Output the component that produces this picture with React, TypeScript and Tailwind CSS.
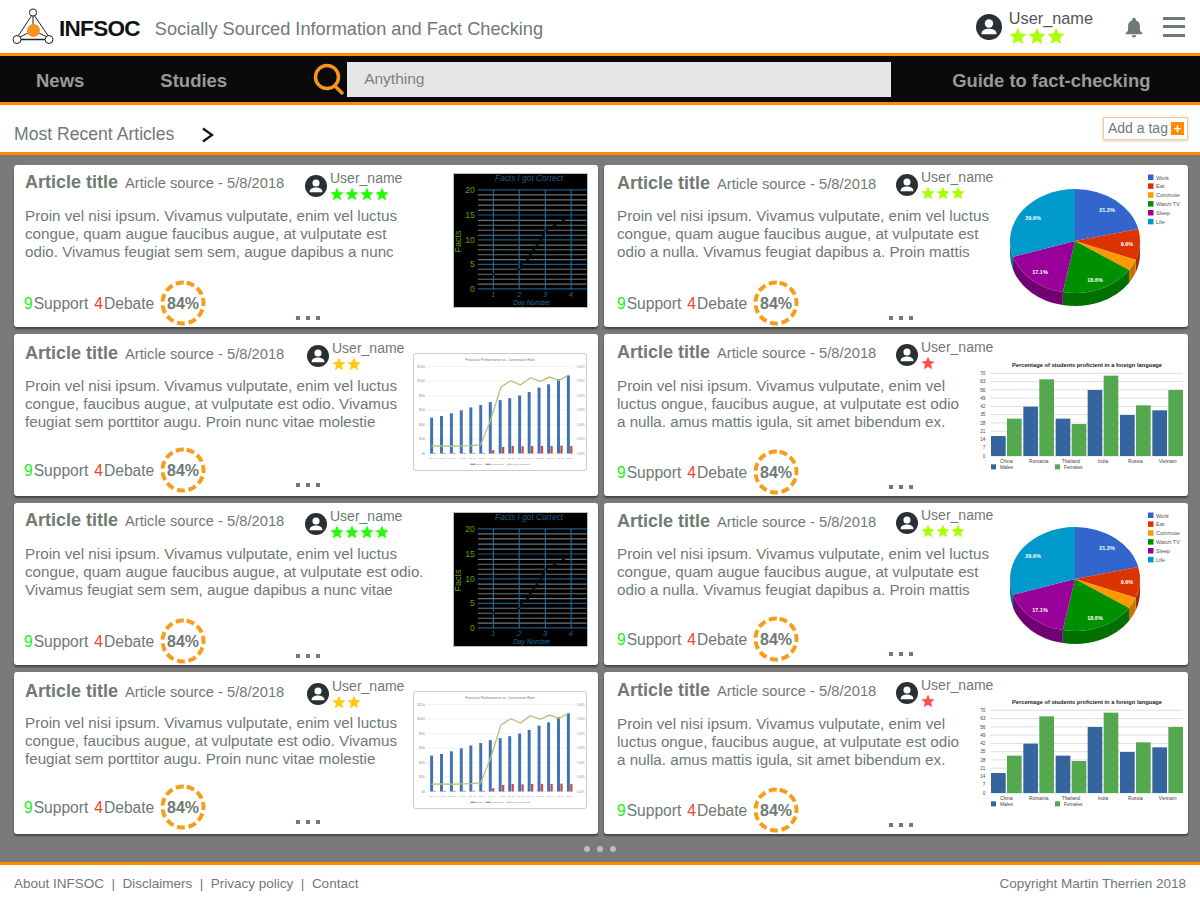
import { ReactNode } from "react";

const INK = "#6f7a72";

function Star({ color, size }: { color: string; size: number }) {
  return (
    <svg width={size} height={size} viewBox="0 0 24 24" fill={color}>
      <path d="M12 1l3.2 7.6 8.2.7-6.2 5.4 1.9 8-7.1-4.3-7.1 4.3 1.9-8L.6 9.300l8.200-.7z" />
    </svg>
  );
}

function Avatar({ size }: { size: number }) {
  return (
    <svg width={size} height={size} viewBox="0 0 26 26" className="shrink-0">
      <circle cx="13" cy="13" r="13" fill="#2a3033" />
      <circle cx="13" cy="9.500" r="4.200" fill="#fff" />
      <path d="M5.500 19.500c0-3.400 4.200-4.800 7.500-4.800s7.500 1.400 7.500 4.800v.8h-15z" fill="#fff" />
    </svg>
  );
}

function Logo() {
  return (
    <svg width="44" height="40" viewBox="0 0 44 40" className="shrink-0">
      <g fill="none" stroke="#222" strokeWidth="1">
        <path d="M20 8L5.500 30" />
        <path d="M22 8l15 22" />
        <path d="M8 32.500h27" strokeWidth="1.500" />
        <path d="M21 8v10M16 26l-8 4M27 26l8 4" />
      </g>
      <circle cx="21.500" cy="23.500" r="6.500" fill="#f7941d" />
      <g fill="#fff" stroke="#222" strokeWidth="1">
        <circle cx="21" cy="5.500" r="3.600" />
        <circle cx="5" cy="32.500" r="4" />
        <circle cx="37" cy="32.500" r="4" />
      </g>
    </svg>
  );
}

function Gauge() {
  return (
    <svg width="46" height="46" viewBox="0 0 46 46" className="shrink-0">
      <circle
        cx="23"
        cy="23"
        r="20.500"
        fill="none"
        stroke="#f79d1c"
        strokeWidth="4"
        strokeDasharray="8 3.710"
        transform="rotate(-80 23 23)"
      />
      <text x="23" y="28.500" textAnchor="middle" fontSize="16" fontWeight="700" fill={INK}>
        84%
      </text>
    </svg>
  );
}

function FactsChart() {
  const rows = [88, 103, 119, 134, 165, 180, 195, 210, 240, 254, 269, 284, 313, 328, 343, 358];
  const marks = [
    [155, 327], [232, 313], [238, 298], [258, 284], [266, 269], [276, 254], [286, 240],
    [298, 224], [306, 210], [314, 195], [340, 180], [366, 165],
  ];
  return (
    <svg width="135" height="135" viewBox="40 25 402 402" className="border border-[#bbb] bg-black">
      <rect x="40" y="25" width="402" height="402" fill="#000" />
      {rows.map((y) => (
        <line key={y} x1="112" x2="441" y1={y} y2={y} stroke="#6f7373" strokeWidth="3.500" />
      ))}
      {[73, 149, 224, 298, 372].map((y) => (
        <line key={y} x1="112" x2="441" y1={y} y2={y} stroke="#1c5a85" strokeWidth="3.500" />
      ))}
      {[159, 237, 316, 394].map((x) => (
        <line key={x} x1={x} x2={x} y1="73" y2="374" stroke="#2078ac" strokeWidth="3" />
      ))}
      {marks.map(([x, y]) => (
        <rect key={`${x}-${y}`} x={x} y={y - 2} width="9" height="4" fill="#000" />
      ))}
      {[[20, 73], [15, 149], [10, 224], [5, 298], [0, 372]].map(([n, y]) => (
        <text key={n} x="103" y={y + 9} textAnchor="end" fontSize="26" fill="#639f00">
          {n}
        </text>
      ))}
      <text x="60" y="262" fontSize="27" fill="#639f00" transform="rotate(-90 60 262)">
        Facts
      </text>
      <text x="267" y="47" textAnchor="middle" fontSize="25" fontStyle="italic" fill="#1d5c88">
        Facts I got Correct
      </text>
      {[1, 2, 3, 4].map((n) => (
        <text key={n} x={81 + n * 78} y="396" textAnchor="middle" fontSize="22" fontStyle="italic" fill="#1d6b9c">
          {n}
        </text>
      ))}
      <text x="275" y="421" textAnchor="middle" fontSize="20" fontStyle="italic" fill="#1d6b9c">
        Day Number
      </text>
    </svg>
  );
}

const slices = [
  { name: "Work", pct: 21.3, top: "#3366cc", wall: "#2a52a3" },
  { name: "Eat", pct: 9.6, top: "#dd3300", wall: "#a82c0e" },
  { name: "Commute", pct: 3.5, top: "#ff9900", wall: "#c47600" },
  { name: "Watch TV", pct: 18.6, top: "#008f00", wall: "#007000" },
  { name: "Sleep", pct: 17.1, top: "#990099", wall: "#730073" },
  { name: "Life", pct: 29.9, top: "#0099cc", wall: "#007799" },
];

function PieChart() {
  const cx = 70;
  const cy = 71;
  const rx = 65;
  const ry = 52;
  const depth = 13;
  const pt = (deg: number, dy = 0) => {
    const a = (deg * Math.PI) / 180;
    return `${(cx + rx * Math.sin(a)).toFixed(2)} ${(cy - ry * Math.cos(a) + dy).toFixed(2)}`;
  };
  let angle = 0;
  const parts = slices.map((s) => {
    const from = angle;
    angle += (s.pct / 100) * 360;
    return { ...s, from, to: angle };
  });
  return (
    <svg width="180" height="140" viewBox="0 0 180 140">
      {parts.map((s) => {
        const a = Math.max(s.from, 90);
        const b = Math.min(s.to, 270);
        if (a >= b) return null;
        return (
          <path
            key={s.name}
            d={`M${pt(a)} A${rx} ${ry} 0 0 1 ${pt(b)} L${pt(b, depth)} A${rx} ${ry} 0 0 0 ${pt(a, depth)} Z`}
            fill={s.wall}
          />
        );
      })}
      {parts.map((s) => (
        <path
          key={s.name}
          d={`M${cx} ${cy} L${pt(s.from)} A${rx} ${ry} 0 ${s.to - s.from > 180 ? 1 : 0} 1 ${pt(s.to)} Z`}
          fill={s.top}
        />
      ))}
      {[
        ["21.3%", 102, 42],
        ["9.6%", 122, 76],
        ["18.6%", 90, 112],
        ["17.1%", 35, 104],
        ["29.9%", 28, 50],
      ].map(([t, x, y]) => (
        <text key={t} x={x} y={y} fontSize="5.500" fontWeight="700" fill="#fff" textAnchor="middle">
          {t}
        </text>
      ))}
      {parts.map((s, i) => (
        <g key={s.name}>
          <rect x="143" y={4.500 + i * 8.870} width="5.500" height="5.500" fill={s.top} />
          <text x="151" y={9.500 + i * 8.870} fontSize="5.500" fill="#555">
            {s.name}
          </text>
        </g>
      ))}
    </svg>
  );
}

function FinanceChart() {
  const xs = [92, 122, 152, 182, 211, 241, 270, 300, 329, 359, 388, 418, 447, 477, 507];
  const tops = [233, 228, 220, 211, 202, 195, 186, 180, 174, 166, 155, 142, 132, 116, 105];
  const reds = [340, 340, 340, 340, 340, 340, 332, 322, 319, 320, 319, 319, 319, 318, 319];
  const line =
    "92,320 122,319 152,320 182,319 211,318 241,316 270,245 303,140 333,121 362,134 392,112 422,123 450,110 480,120 510,103";
  const months = ["Jan-17", "Feb-17", "Mar-17", "Apr-17", "May-17", "Jun-17", "Jul-17", "Aug-17", "Sep-17", "Oct-17", "Nov-17", "Dec-17", "Jan-18", "Feb-18", "Mar-18"];
  return (
    <svg width="174" height="118" viewBox="40 40 520 352" className="rounded-[3px] border border-[#ccc] bg-white">
      <text x="300" y="62" textAnchor="middle" fontSize="11" fill="#777">
        Financial Performance vs. Conversion Rate
      </text>
      {[78, 122, 166, 210, 254, 298, 342].map((y, i) => (
        <g key={y}>
          <line x1="78" x2="522" y1={y} y2={y} stroke="#e6e6e6" strokeWidth="1.500" />
          <text x="72" y={y + 3} textAnchor="end" fontSize="8" fill="#888">
            ${(6 - i) * 200}
          </text>
          <text x="534" y={y + 3} fontSize="8" fill="#888">
            {((6 - i) * 0.5).toFixed(2)}%
          </text>
        </g>
      ))}
      {xs.map((x, i) => (
        <g key={x}>
          <rect x={x - 4} y={tops[i]} width="9" height={342 - tops[i]} fill="#4073b4" />
          <rect x={x + 6} y={reds[i]} width="7" height={342 - reds[i]} fill="#c0504d" />
          <text x={x + 4} y="358" textAnchor="middle" fontSize="7" fill="#888">
            {months[i]}
          </text>
        </g>
      ))}
      <polyline points={line} fill="none" stroke="#b5c27a" strokeWidth="4" />
      <rect x="210" y="373" width="16" height="3" fill="#4a7ebb" />
      <text x="229" y="378" fontSize="7" fill="#777">Sales</text>
      <rect x="256" y="373" width="16" height="3" fill="#c0504d" />
      <text x="275" y="378" fontSize="7" fill="#777">Gross Profit</text>
      <rect x="320" y="373" width="16" height="3" fill="#b5c27a" />
      <text x="339" y="378" fontSize="7" fill="#777">Conversion Rate</text>
    </svg>
  );
}

function LanguageChart() {
  const groups = [
    { name: "China", x: 93, male: 288, female: 236 },
    { name: "Romania", x: 190, male: 200, female: 118 },
    { name: "Thailand", x: 287, male: 236, female: 252 },
    { name: "India", x: 383, male: 150, female: 107 },
    { name: "Russia", x: 480, male: 225, female: 196 },
    { name: "Vietnam", x: 577, male: 211, female: 150 },
  ];
  return (
    <svg width="210" height="112" viewBox="45 60 630 336">
      <text x="381" y="80" textAnchor="middle" fontSize="17.200" fontWeight="700" fill="#222">
        Percentage of students proficient in a foreign language
      </text>
      {[70, 63, 56, 49, 42, 35, 28, 21, 14, 7, 0].map((n, i) => (
        <g key={n}>
          <line x1="92" x2="668" y1={100 + i * 24.800} y2={100 + i * 24.800} stroke="#ccc" strokeWidth="2" />
          <text x="76" y={105 + i * 24.800} textAnchor="end" fontSize="14" fill="#444">
            {n}
          </text>
        </g>
      ))}
      {groups.map((g) => (
        <g key={g.name}>
          <rect x={g.x} y={g.male} width="44" height={348 - g.male} fill="#35659f" />
          <rect x={g.x + 48} y={g.female} width="44" height={348 - g.female} fill="#56a84f" />
          <text x={g.x + 46} y="369" textAnchor="middle" fontSize="14.500" fill="#444">
            {g.name}
          </text>
        </g>
      ))}
      <rect x="93" y="373" width="15" height="15" fill="#35659f" />
      <text x="120" y="388" fontSize="14.500" fill="#444">Males</text>
      <rect x="285" y="373" width="15" height="15" fill="#56a84f" />
      <text x="312" y="388" fontSize="14.500" fill="#444">Females</text>
    </svg>
  );
}

type Card = {
  lines: string[];
  stars: number;
  starColor: string;
  chart: ReactNode;
  chartBox: string;
  leftBox: string;
  titleTop: string;
  userBox: string;
  bodyTop: string;
  foot: string;
};

const text1 = ["Proin vel nisi ipsum. Vivamus vulputate, enim vel luctus", "congue, quam augue faucibus augue, at vulputate est", "odio. Vivamus feugiat sem sem, augue dapibus a nunc"];
const text2 = ["Proin vel nisi ipsum. Vivamus vulputate, enim vel luctus", "congue, quam augue faucibus augue, at vulputate est", "odio a nulla. Vivamus feugiat dapibus a. Proin mattis"];
const text3 = ["Proin vel nisi ipsum. Vivamus vulputate, enim vel luctus", "congue, faucibus augue, at vulputate est odio. Vivamus", "feugiat sem porttitor augu. Proin nunc vitae molestie"];
const text4 = ["Proin vel nisi ipsum. Vivamus vulputate, enim vel", "luctus ongue, faucibus augue, at vulputate est odio", "a nulla. amus mattis igula, sit amet bibendum ex."];
const text5 = ["Proin vel nisi ipsum. Vivamus vulputate, enim vel luctus", "congue, quam augue faucibus augue, at vulputate est odio.", "Vivamus feugiat sem sem, augue dapibus a nunc vitae"];

const GREEN = "#22ff00";
const LIME = "#aaff00";
const GOLD = "#ffc814";
const RED = "#ff4f4f";

const factsBox = "pr-[10px] pt-[8px]";
const pieBox = "pr-[3px] pt-[5px]";
const financeBox = "pr-[11px] pt-[19px]";
const langBox = "pr-[3px] pt-[26px]";

const cards: Card[] = [
  { lines: text1, stars: 4, starColor: GREEN, chart: <FactsChart />, chartBox: factsBox, leftBox: "pl-[11px]", titleTop: "pt-[6px]", userBox: "ml-[280px] pt-[6px]", bodyTop: "mt-[4px]", foot: "-ml-[1px] pb-[1px]" },
  { lines: text2, stars: 3, starColor: LIME, chart: <PieChart />, chartBox: pieBox, leftBox: "pl-[13px]", titleTop: "pt-[7px]", userBox: "ml-[279px] pt-[5px]", bodyTop: "mt-[4px]", foot: "pb-[1px]" },
  { lines: text3, stars: 2, starColor: GOLD, chart: <FinanceChart />, chartBox: financeBox, leftBox: "pl-[11px]", titleTop: "pt-[8px]", userBox: "ml-[282px] pt-[7px]", bodyTop: "mt-[5px]", foot: "-ml-[1px] pb-[3px]" },
  { lines: text4, stars: 1, starColor: RED, chart: <LanguageChart />, chartBox: langBox, leftBox: "pl-[13px]", titleTop: "pt-[7px]", userBox: "ml-[279px] pt-[6px]", bodyTop: "mt-[5px]", foot: "pb-[1px]" },
  { lines: text5, stars: 4, starColor: GREEN, chart: <FactsChart />, chartBox: "pr-[10px] pt-[9px]", leftBox: "pl-[11px]", titleTop: "pt-[6px]", userBox: "ml-[280px] pt-[6px]", bodyTop: "mt-[4px]", foot: "-ml-[1px] pb-[1px]" },
  { lines: text2, stars: 3, starColor: LIME, chart: <PieChart />, chartBox: pieBox, leftBox: "pl-[13px]", titleTop: "pt-[7px]", userBox: "ml-[279px] pt-[5px]", bodyTop: "mt-[4px]", foot: "pb-[3px]" },
  { lines: text3, stars: 2, starColor: GOLD, chart: <FinanceChart />, chartBox: financeBox, leftBox: "pl-[11px]", titleTop: "pt-[8px]", userBox: "ml-[282px] pt-[7px]", bodyTop: "mt-[4px]", foot: "-ml-[1px] pb-[4px]" },
  { lines: text4, stars: 1, starColor: RED, chart: <LanguageChart />, chartBox: "pr-[3px] pt-[25px]", leftBox: "pl-[13px]", titleTop: "pt-[7px]", userBox: "ml-[279px] pt-[6px]", bodyTop: "mt-[5px]", foot: "pb-[1px]" },
];

function ArticleCard({ card }: { card: Card }) {
  return (
    <article className="flex overflow-hidden rounded-[3px] bg-white shadow-[0_2px_2px_rgba(0,0,0,0.45)]">
      <div className={`flex min-w-0 flex-1 flex-col ${card.leftBox}`}>
        <div className="relative h-[38px]">
          <div className={`flex items-baseline gap-[7px] whitespace-nowrap ${card.titleTop}`}>
            <span className="text-[18px] leading-[22px] font-bold text-[#6f7a72]">Article title</span>
            <span className="text-[14.700px] text-[#6f7a72]">Article source - 5/8/2018</span>
          </div>
          <div className={`absolute top-0 left-0 flex items-center gap-[3px] ${card.userBox}`}>
            <Avatar size={22} />
            <div className="flex flex-col">
              <span className="text-[14px] leading-[15px] text-[#6f7a72]">User_name</span>
              <span className="mt-[1px] flex gap-[1px]">
                {Array.from({ length: card.stars }).map((_, i) => (
                  <Star key={i} color={card.starColor} size={14} />
                ))}
              </span>
            </div>
          </div>
        </div>
        <div className={`text-[15.200px] leading-[18px] whitespace-nowrap text-[#6f7a72] ${card.bodyTop}`}>
          {card.lines.map((l) => (
            <div key={l}>{l}</div>
          ))}
        </div>
        <div className={`mt-auto flex items-center text-[15.600px] text-[#6f7a72] ${card.foot}`}>
          <span className="flex pt-[2px]">
            <span className="text-[#22ee22]">9</span>
            <span className="ml-[1px]">Support</span>
            <span className="ml-[6px] text-[#f04030]">4</span>
            <span className="ml-[1px]">Debate</span>
          </span>
          <span className="ml-[6px]">
            <Gauge />
          </span>
          <span className="mb-[6px] ml-[90px] flex gap-[6px] self-end">
            <i className="h-[4px] w-[4px] bg-[#6f7a72]" />
            <i className="h-[4px] w-[4px] bg-[#6f7a72]" />
            <i className="h-[4px] w-[4px] bg-[#6f7a72]" />
          </span>
        </div>
      </div>
      <div className={`shrink-0 ${card.chartBox}`}>{card.chart}</div>
    </article>
  );
}

export default function App() {
  return (
    <div className="flex h-[900px] w-[1200px] flex-col overflow-hidden bg-white font-['Liberation_Sans',Arial,sans-serif]">
      <header className="flex h-[53px] shrink-0 items-center pl-[12px]">
        <Logo />
        <span className="mt-[5px] ml-[3px] text-[22.500px] font-bold tracking-[-0.7px] text-[#111]">INFSOC</span>
        <span className="mt-[6px] ml-[15px] text-[18.200px] text-[#6f7a72]">Socially Sourced Information and Fact Checking</span>
        <div className="ml-auto flex items-center">
          <Avatar size={26} />
          <div className="mt-[1px] ml-[7px] flex flex-col">
            <span className="text-[16.300px] leading-[18px] text-[#555]">User_name</span>
            <span className="flex gap-[1px]">
              <Star color={LIME} size={18} />
              <Star color={LIME} size={18} />
              <Star color={LIME} size={18} />
            </span>
          </div>
          <svg width="22" height="22" viewBox="0 0 24 24" fill="#6f7a72" className="ml-[30px]">
            <path d="M12 2a2 2 0 0 0-2 2v.600C7 5.500 5.500 8 5.500 11v5L3 18.500V20h18v-1.500L18.500 16v-5c0-3-1.500-5.500-4.500-6.400V4a2 2 0 0 0-2-2zM9.500 21a2.500 2.500 0 0 0 5 0z" />
          </svg>
          <div className="mr-[15px] ml-[18px] flex w-[22px] flex-col gap-[5.500px]">
            <i className="h-[3px] bg-[#6f7a72]" />
            <i className="h-[3px] bg-[#6f7a72]" />
            <i className="h-[3px] bg-[#6f7a72]" />
          </div>
        </div>
      </header>

      <nav className="flex h-[52px] shrink-0 items-center border-y-[3px] border-[#ff8c00] bg-[#0a0a0a] text-[#999]">
        <a className="mt-[3px] ml-[36px] text-[18.500px] font-bold">News</a>
        <a className="mt-[3px] ml-[76px] text-[18.500px] font-bold">Studies</a>
        <svg width="32" height="34" viewBox="0 0 32 34" fill="none" stroke="#f7941d" strokeWidth="3.500" className="ml-[86px]">
          <circle cx="14" cy="15" r="11.500" />
          <path d="M22 24l7 7" strokeLinecap="round" />
        </svg>
        <div className="ml-[2px] flex h-[35px] w-[544px] items-center bg-[#e6e6e6] pl-[17px] text-[15.500px] text-[#808080]">
          Anything
        </div>
        <a className="mt-[3px] ml-[61px] text-[18.400px] font-bold">Guide to fact-checking</a>
      </nav>

      <div className="flex h-[50px] shrink-0 items-center border-b-[3px] border-[#ff8c00] pr-[12px] pl-[14px]">
        <span className="mt-[11px] text-[17.600px] text-[#6f7a72]">Most Recent Articles</span>
        <svg width="13" height="16" viewBox="0 0 13 16" fill="none" stroke="#111" strokeWidth="2.200" className="mt-[12px] ml-[27px]">
          <path d="M2 1.500l9 6.500-9 6.500" />
        </svg>
        <button className="ml-auto flex h-[23px] w-[85px] items-center gap-[3px] border border-[#fbc98a] pl-[4px] text-[14px] whitespace-nowrap text-[#6f7a72] shadow-[0_1px_3px_rgba(0,0,0,0.2)]">
          Add a tag
          <span className="flex h-[13px] w-[13px] items-center justify-center bg-[#ff8c00] text-[13px] leading-none font-bold text-white">
            +
          </span>
        </button>
      </div>

      <main className="flex flex-1 flex-col bg-[#7a7a7a] pt-[10px]">
        <div className="mr-[12px] ml-[14px] grid grid-cols-2 grid-rows-[repeat(4,162px)] gap-x-[6px] gap-y-[7px]">
          {cards.map((c, i) => (
            <ArticleCard key={i} card={c} />
          ))}
        </div>
        <div className="mt-[12px] flex justify-center gap-[7px]">
          <i className="h-[6px] w-[6px] rounded-full bg-[#bdbdbd]" />
          <i className="h-[6px] w-[6px] rounded-full bg-[#bdbdbd]" />
          <i className="h-[6px] w-[6px] rounded-full bg-[#bdbdbd]" />
        </div>
      </main>

      <footer className="flex h-[38px] shrink-0 items-center justify-between border-t-[3px] border-[#ff8c00] px-[14px] pt-[4px] text-[13.500px] text-[#6f7a72]">
        <span className="flex gap-[7.500px]">
          <span>About INFSOC</span>
          <span>|</span>
          <span>Disclaimers</span>
          <span>|</span>
          <span>Privacy policy</span>
          <span>|</span>
          <span>Contact</span>
        </span>
        <span>Copyright Martin Therrien 2018</span>
      </footer>
    </div>
  );
}
